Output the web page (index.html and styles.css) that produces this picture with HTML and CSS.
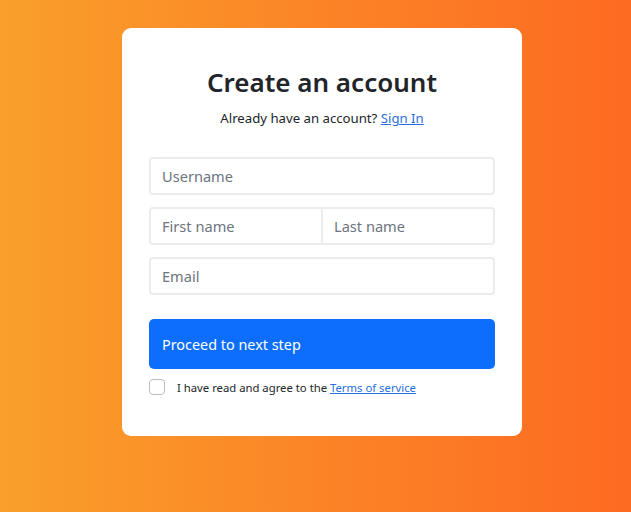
FILE: index.html
```html
<!DOCTYPE html>
<html lang="en">
<head>
<meta charset="utf-8">
<title>Create an account</title>
<link rel="stylesheet" href="styles.css">
</head>
<body>
<main class="card">
  <h1 class="title">Create an account</h1>
  <p class="subtitle">Already have an account? <a href="#" class="link">Sign In</a></p>
  <form class="form">
    <input class="field" type="text" placeholder="Username">
    <div class="pair">
      <input class="field field-left" type="text" placeholder="First name">
      <input class="field field-right" type="text" placeholder="Last name">
    </div>
    <input class="field" type="email" placeholder="Email">
    <button class="btn" type="button">Proceed to next step</button>
    <label class="agree">
      <span class="box"></span>
      <span class="agree-text">I have read and agree to the <a href="#" class="link">Terms of service</a></span>
    </label>
  </form>
</main>
</body>
</html>
```
FILE: styles.css
```css
html, body {
  margin: 0;
  height: 100%;
}
body {
  background: linear-gradient(to right, #f99f2b, #fd6a22);
  font-family: "Noto Sans", "Open Sans", sans-serif;
  color: #212529;
  overflow: hidden;
}
.card {
  box-sizing: border-box;
  width: 400px;
  margin: 28px 0 0 122px;
  background: #fff;
  border-radius: 9px;
  padding: 34px 27px 41px;
}
.title {
  margin: 0;
  text-align: center;
  font-size: 26px;
  font-weight: 600;
  line-height: 40px;
}
.subtitle {
  margin: 6px 0 0;
  text-align: center;
  font-size: 13.2px;
  line-height: 21px;
}
.link {
  color: #2a6fe0;
  text-decoration: underline;
}
.form {
  margin-top: 28px;
  display: flex;
  flex-direction: column;
  gap: 12px;
}
.field {
  box-sizing: border-box;
  width: 100%;
  height: 38px;
  border: 2px solid #ececec;
  border-radius: 4px;
  padding: 0 11px;
  font: 14.6px "Noto Sans", "Open Sans", sans-serif;
  color: #212529;
  background: #fff;
  outline: none;
}
.field::placeholder {
  color: #6c757d;
}
.pair {
  display: flex;
}
.field-left {
  border-radius: 4px 0 0 4px;
  flex: 1;
}
.field-right {
  border-radius: 0 4px 4px 0;
  border-left: none;
  flex: 1;
}
.btn {
  margin-top: 12px;
  height: 50px;
  border: none;
  border-radius: 5px;
  background: #0d6efd;
  color: #fff;
  text-align: left;
  padding: 0 13px;
  font: 14.4px "Noto Sans", "Open Sans", sans-serif;
}
.agree {
  display: flex;
  align-items: center;
  gap: 12px;
  font-size: 11.3px;
  margin-top: -2px;
}
.box {
  box-sizing: border-box;
  width: 16px;
  height: 16px;
  border: 1px solid #b8bdc2;
  border-radius: 4px;
  background: #fff;
}
```
